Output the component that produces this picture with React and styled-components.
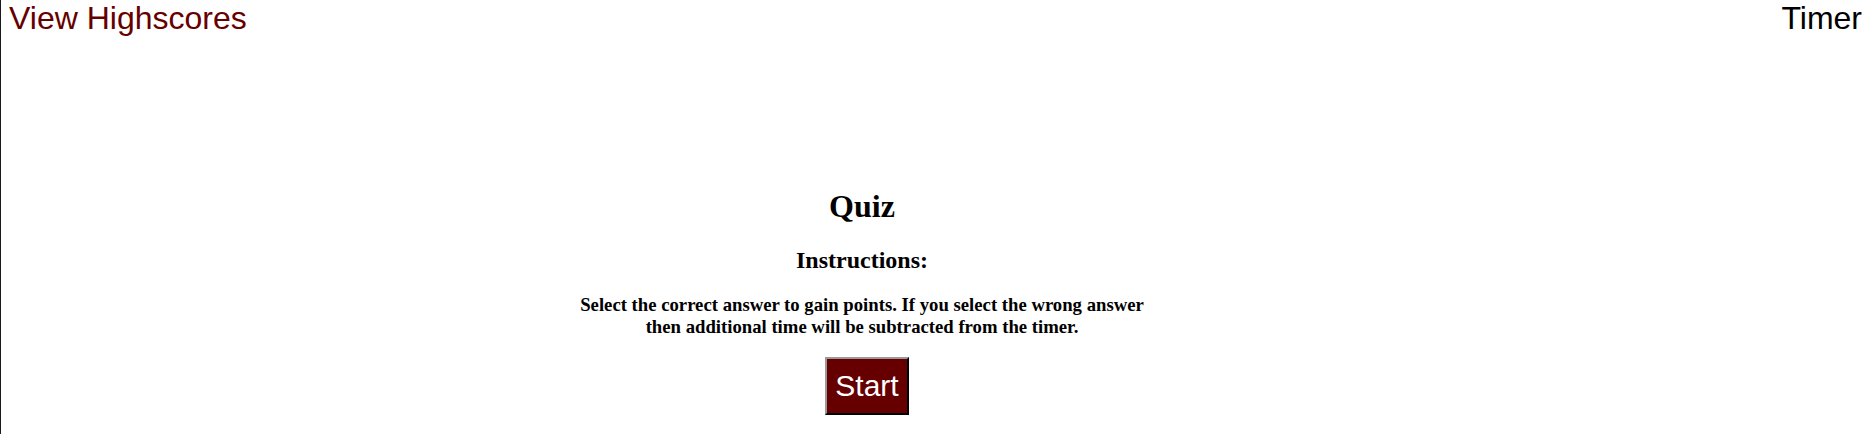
import React from "react";
import styled, { createGlobalStyle } from "styled-components";

const GlobalStyle = createGlobalStyle`
  html, body {
    margin: 0;
    padding: 0;
    background: #ffffff;
  }
  body {
    font-family: "Liberation Serif", "Times New Roman", serif;
    color: #000000;
  }
`;

const Page = styled.div`
  min-height: 100vh;
  border-left: 1px solid #1a1a1a;
  box-sizing: border-box;
`;

const Header = styled.header`
  display: flex;
  justify-content: space-between;
  align-items: flex-start;
  padding: 0 6px 0 8px;
  font-family: "Liberation Sans", Arial, sans-serif;
  font-size: 32px;
`;

const HeaderLink = styled.a`
  color: #660000;
  text-decoration: none;
  cursor: pointer;
`;

const TimerLabel = styled.span`
  color: #000000;
`;

const Main = styled.main`
  padding-top: 130px;
  margin-right: 145px;
`;

const Card = styled.section`
  width: 596px;
  margin: 0 auto;
  text-align: center;
  font-weight: bold;
`;

const Title = styled.h1`
  font-size: 32px;
  margin: 21.44px 0;
`;

const Subtitle = styled.h2`
  font-size: 24px;
  margin: 19.92px 0;
`;

const Instructions = styled.h3`
  font-size: 18.72px;
  margin: 18.72px 0;
`;

const Actions = styled.div`
  margin: 0;
`;

const StartButton = styled.button`
  margin-left: 10px;
  font-family: "Liberation Sans", Arial, sans-serif;
  font-size: 30px;
  color: #ffffff;
  background: #660000;
  padding: 10px 8px;
  border: 2px outset #8a8a8a;
  border-top-color: #9a9a9a;
  border-left-color: #9a9a9a;
  border-right-color: #3a3a3a;
  border-bottom-color: #3a3a3a;
  cursor: pointer;
  line-height: normal;
`;

export default function App() {
  return (
    <>
      <GlobalStyle />
      <Page>
        <Header>
          <HeaderLink>View Highscores</HeaderLink>
          <TimerLabel>Timer</TimerLabel>
        </Header>
        <Main>
          <Card>
            <Title>Quiz</Title>
            <Subtitle>Instructions:</Subtitle>
            <Instructions>
              Select the correct answer to gain points. If you select the wrong
              answer then additional time will be subtracted from the timer.
            </Instructions>
            <Actions>
              <StartButton>Start</StartButton>
            </Actions>
          </Card>
        </Main>
      </Page>
    </>
  );
}
